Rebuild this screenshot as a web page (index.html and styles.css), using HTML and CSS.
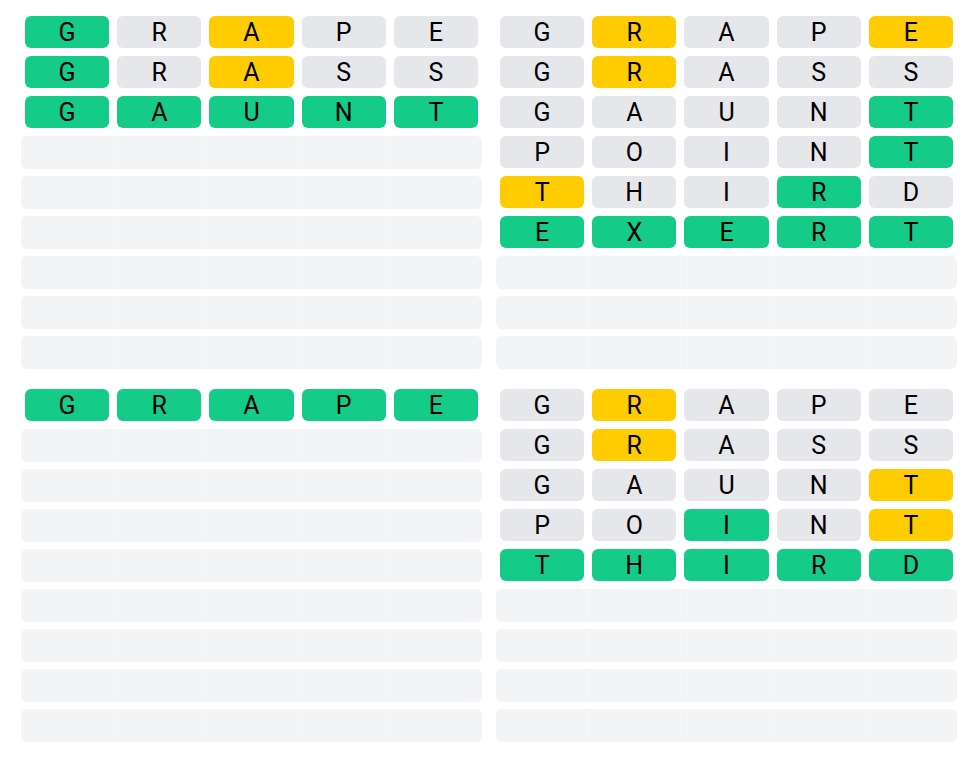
FILE: index.html
```html
<!DOCTYPE html>
<html>
<head>
<meta charset="utf-8">
<link rel="stylesheet" href="styles.css">
</head>
<body>
<div class="page">
  <div class="board">
    <div class="row"><div class="tile g">G</div><div class="tile n">R</div><div class="tile y">A</div><div class="tile n">P</div><div class="tile n">E</div></div>
    <div class="row"><div class="tile g">G</div><div class="tile n">R</div><div class="tile y">A</div><div class="tile n">S</div><div class="tile n">S</div></div>
    <div class="row"><div class="tile g">G</div><div class="tile g">A</div><div class="tile g">U</div><div class="tile g">N</div><div class="tile g">T</div></div>
    <div class="row"><div class="empty"><i></i><i></i><i></i><i></i><i></i></div></div>
    <div class="row"><div class="empty"><i></i><i></i><i></i><i></i><i></i></div></div>
    <div class="row"><div class="empty"><i></i><i></i><i></i><i></i><i></i></div></div>
    <div class="row"><div class="empty"><i></i><i></i><i></i><i></i><i></i></div></div>
    <div class="row"><div class="empty"><i></i><i></i><i></i><i></i><i></i></div></div>
    <div class="row"><div class="empty"><i></i><i></i><i></i><i></i><i></i></div></div>
  </div>
  <div class="board">
    <div class="row"><div class="tile n">G</div><div class="tile y">R</div><div class="tile n">A</div><div class="tile n">P</div><div class="tile y">E</div></div>
    <div class="row"><div class="tile n">G</div><div class="tile y">R</div><div class="tile n">A</div><div class="tile n">S</div><div class="tile n">S</div></div>
    <div class="row"><div class="tile n">G</div><div class="tile n">A</div><div class="tile n">U</div><div class="tile n">N</div><div class="tile g">T</div></div>
    <div class="row"><div class="tile n">P</div><div class="tile n">O</div><div class="tile n">I</div><div class="tile n">N</div><div class="tile g">T</div></div>
    <div class="row"><div class="tile y">T</div><div class="tile n">H</div><div class="tile n">I</div><div class="tile g">R</div><div class="tile n">D</div></div>
    <div class="row"><div class="tile g">E</div><div class="tile g">X</div><div class="tile g">E</div><div class="tile g">R</div><div class="tile g">T</div></div>
    <div class="row"><div class="empty"><i></i><i></i><i></i><i></i><i></i></div></div>
    <div class="row"><div class="empty"><i></i><i></i><i></i><i></i><i></i></div></div>
    <div class="row"><div class="empty"><i></i><i></i><i></i><i></i><i></i></div></div>
  </div>
  <div class="board">
    <div class="row"><div class="tile g">G</div><div class="tile g">R</div><div class="tile g">A</div><div class="tile g">P</div><div class="tile g">E</div></div>
    <div class="row"><div class="empty"><i></i><i></i><i></i><i></i><i></i></div></div>
    <div class="row"><div class="empty"><i></i><i></i><i></i><i></i><i></i></div></div>
    <div class="row"><div class="empty"><i></i><i></i><i></i><i></i><i></i></div></div>
    <div class="row"><div class="empty"><i></i><i></i><i></i><i></i><i></i></div></div>
    <div class="row"><div class="empty"><i></i><i></i><i></i><i></i><i></i></div></div>
    <div class="row"><div class="empty"><i></i><i></i><i></i><i></i><i></i></div></div>
    <div class="row"><div class="empty"><i></i><i></i><i></i><i></i><i></i></div></div>
    <div class="row"><div class="empty"><i></i><i></i><i></i><i></i><i></i></div></div>
  </div>
  <div class="board">
    <div class="row"><div class="tile n">G</div><div class="tile y">R</div><div class="tile n">A</div><div class="tile n">P</div><div class="tile n">E</div></div>
    <div class="row"><div class="tile n">G</div><div class="tile y">R</div><div class="tile n">A</div><div class="tile n">S</div><div class="tile n">S</div></div>
    <div class="row"><div class="tile n">G</div><div class="tile n">A</div><div class="tile n">U</div><div class="tile n">N</div><div class="tile y">T</div></div>
    <div class="row"><div class="tile n">P</div><div class="tile n">O</div><div class="tile g">I</div><div class="tile n">N</div><div class="tile y">T</div></div>
    <div class="row"><div class="tile g">T</div><div class="tile g">H</div><div class="tile g">I</div><div class="tile g">R</div><div class="tile g">D</div></div>
    <div class="row"><div class="empty"><i></i><i></i><i></i><i></i><i></i></div></div>
    <div class="row"><div class="empty"><i></i><i></i><i></i><i></i><i></i></div></div>
    <div class="row"><div class="empty"><i></i><i></i><i></i><i></i><i></i></div></div>
    <div class="row"><div class="empty"><i></i><i></i><i></i><i></i><i></i></div></div>
  </div>
</div>
</body>
</html>
```
FILE: styles.css
```css
html, body {
  margin: 0;
  padding: 0;
  background: #ffffff;
}
body {
  font-family: Roboto, "Liberation Sans", sans-serif;
}
.page {
  display: grid;
  grid-template-columns: 461px 461px;
  column-gap: 14px;
  row-gap: 13px;
  padding: 12px 0 0 21px;
}
.board {
  display: flex;
  flex-direction: column;
}
.row {
  display: grid;
  grid-template-columns: repeat(5, 1fr);
  height: 40px;
  align-items: center;
}
.row .tile {
  margin: 0 4px;
  height: 32px;
  border-radius: 6px;
  display: flex;
  align-items: center;
  justify-content: center;
  font-size: 25px;
  color: #000;
  line-height: 1;
}
.tile.g { background: #14cc88; }
.tile.y { background: #ffcc00; }
.tile.n { background: #e5e7eb; }
.empty {
  grid-column: 1 / 6;
  height: 33px;
  border-radius: 6px;
  overflow: hidden;
  display: grid;
  grid-template-columns: repeat(5, 1fr);
}
.empty i {
  background: #f3f4f6;
}
.empty i + i {
  border-left: 1px solid #f6f7f8;
}
```
